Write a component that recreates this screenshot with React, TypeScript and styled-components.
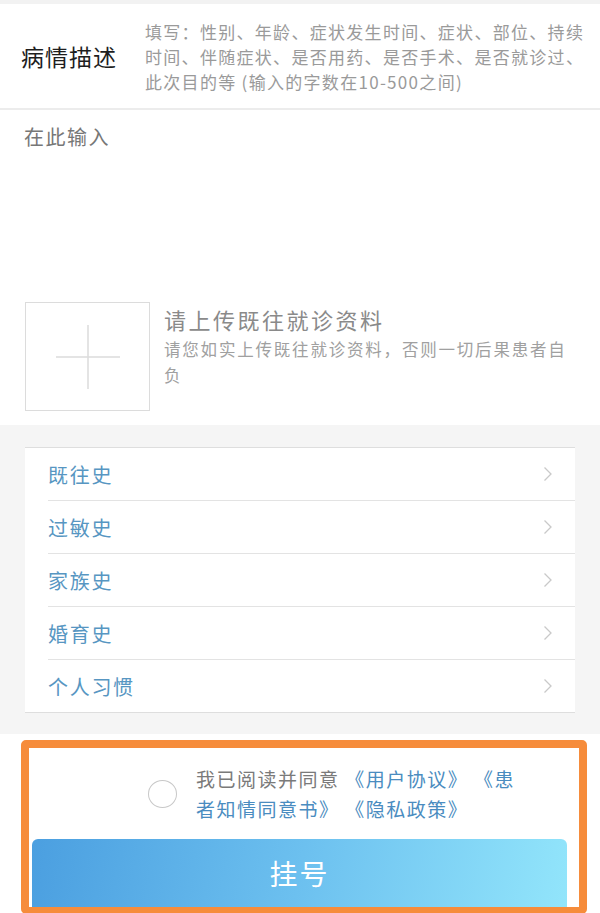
import React from 'react';
import styled, { createGlobalStyle } from 'styled-components';

const GlobalStyle = createGlobalStyle`
  body {
    margin: 0;
    background: #fff;
    font-family: "Noto Sans CJK SC", "Noto Sans", sans-serif;
  }
`;

const Page = styled.div`
  width: 600px;
  min-height: 913px;
  background: #fff;
  overflow: hidden;
`;

const TopStrip = styled.div`
  height: 4px;
  background: #f2f2f2;
`;

const Header = styled.div`
  display: flex;
  align-items: center;
  height: 104px;
  padding: 0 6px 0 21px;
  border-bottom: 2px solid #ececec;
`;

const Title = styled.div`
  flex: 0 0 124px;
  font-size: 23px;
  letter-spacing: 1px;
  color: #1e1e1e;
`;

const Hint = styled.div`
  font-size: 17px;
  letter-spacing: 1.3px;
  line-height: 25px;
  color: #9a9a9a;
`;

const InputArea = styled.div`
  height: 180px;
  padding: 12px 24px 0;
  box-sizing: border-box;
  font-size: 20px;
  letter-spacing: 1.5px;
  color: #777;
`;

const UploadRow = styled.div`
  display: flex;
  align-items: flex-start;
  padding: 12px 20px 12px 25px;
  height: 135px;
  box-sizing: border-box;
`;

const UploadBox = styled.div`
  flex: 0 0 auto;
  width: 125px;
  height: 109px;
  border: 1px solid #dcdcdc;
  box-sizing: border-box;
  display: flex;
  align-items: center;
  justify-content: center;
`;

const UploadText = styled.div`
  margin-left: 14px;
  padding-top: 2px;
`;

const UploadTitle = styled.div`
  font-size: 22px;
  letter-spacing: 2.5px;
  line-height: 30px;
  color: #8a8a8a;
`;

const UploadSub = styled.div`
  margin-top: 2px;
  font-size: 16.5px;
  letter-spacing: 1.8px;
  line-height: 26px;
  color: #a0a0a0;
`;

const GreySection = styled.div`
  background: #f5f5f5;
  padding: 22px 25px 21px;
`;

const Card = styled.div`
  background: #fff;
  border-top: 1px solid #dedede;
  border-bottom: 1px solid #dedede;
`;

const Row = styled.div<{ last?: boolean }>`
  display: flex;
  align-items: center;
  justify-content: space-between;
  height: 52px;
  margin-left: 23px;
  padding-right: 22px;
  border-bottom: ${(p) => (p.last ? 'none' : '1px solid #e3e3e3')};
  font-size: 20px;
  letter-spacing: 1.7px;
  color: #5796c2;
`;

const Footer = styled.div`
  padding: 6px 13px 0 21px;
`;

const Frame = styled.div`
  border: 8px solid #f68c3b;
  border-bottom-width: 7px;
  border-radius: 5px;
  background: #fff;
  padding-left: 3px;
  padding-right: 12px;
`;

const Agree = styled.div`
  display: flex;
  align-items: center;
  height: 91px;
  padding-left: 116px;
`;

const Circle = styled.div`
  flex: 0 0 auto;
  width: 27px;
  height: 26px;
  border: 1px solid #c8c8c8;
  border-radius: 50%;
`;

const AgreeText = styled.p`
  margin: 0 0 0 19px;
  width: 332px;
  font-size: 19px;
  letter-spacing: 1.5px;
  line-height: 30px;
`;

const Plain = styled.span`
  color: #7a7a7a;
`;

const Link = styled.span`
  color: #4a8cc0;
`;

const Button = styled.div`
  height: 68px;
  border-radius: 6px 6px 0 0;
  background: linear-gradient(100deg, #4b9fe0 0%, #6cc0ef 50%, #92e5fb 100%);
  display: flex;
  align-items: center;
  justify-content: center;
  font-size: 28px;
  color: #fff;
  letter-spacing: 2px;
`;

const Chevron = () => (
  <svg width="10" height="16" viewBox="0 0 10 16">
    <path d="M1.5 1.5 L8 8 L1.5 14.5" fill="none" stroke="#c9c9c9" strokeWidth="1.3" />
  </svg>
);

const Plus = () => (
  <svg width="64" height="64" viewBox="0 0 64 64">
    <path d="M0 32 H64 M32 0 V64" stroke="#dcdcdc" strokeWidth="1.5" />
  </svg>
);

const histories = ['既往史', '过敏史', '家族史', '婚育史', '个人习惯'];

export default function App() {
  return (
    <Page>
      <GlobalStyle />
      <TopStrip />
      <Header>
        <Title>病情描述</Title>
        <Hint>
          填写：性别、年龄、症状发生时间、症状、部位、持续时间、伴随症状、是否用药、是否手术、是否就诊过、此次目的等 (输入的字数在10-500之间)
        </Hint>
      </Header>
      <InputArea>在此输入</InputArea>
      <UploadRow>
        <UploadBox>
          <Plus />
        </UploadBox>
        <UploadText>
          <UploadTitle>请上传既往就诊资料</UploadTitle>
          <UploadSub>请您如实上传既往就诊资料，否则一切后果患者自负</UploadSub>
        </UploadText>
      </UploadRow>
      <GreySection>
        <Card>
          {histories.map((h, i) => (
            <Row key={h} last={i === histories.length - 1}>
              <span>{h}</span>
              <Chevron />
            </Row>
          ))}
        </Card>
      </GreySection>
      <Footer>
        <Frame>
          <Agree>
            <Circle />
            <AgreeText>
              <Plain>我已阅读并同意 </Plain>
              <Link>《用户协议》 《患者知情同意书》 《隐私政策》</Link>
            </AgreeText>
          </Agree>
          <Button>挂号</Button>
        </Frame>
      </Footer>
    </Page>
  );
}
